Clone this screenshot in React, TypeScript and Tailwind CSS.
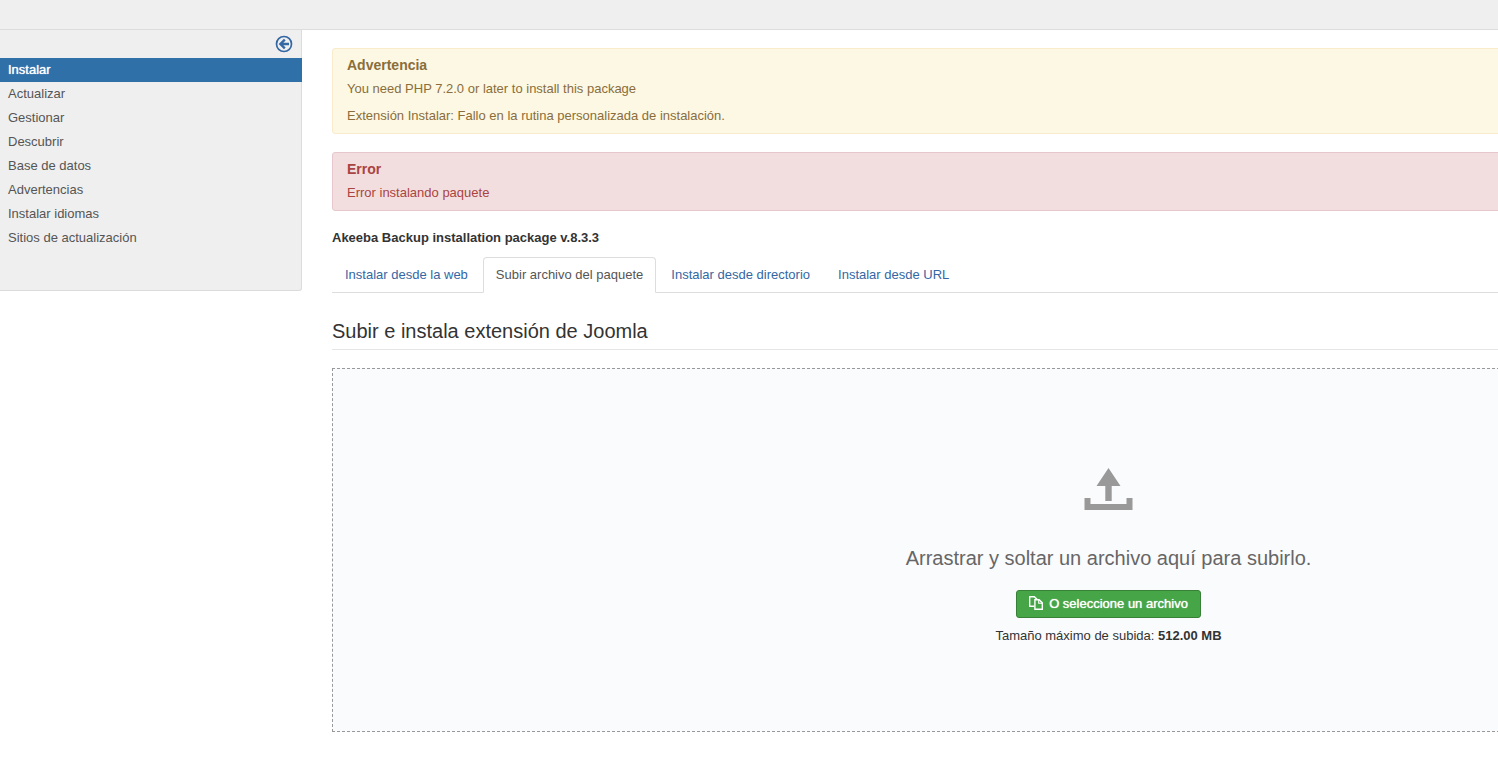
const menu = [
  "Instalar",
  "Actualizar",
  "Gestionar",
  "Descubrir",
  "Base de datos",
  "Advertencias",
  "Instalar idiomas",
  "Sitios de actualización",
];

const tabs = [
  "Instalar desde la web",
  "Subir archivo del paquete",
  "Instalar desde directorio",
  "Instalar desde URL",
];

function ArrowLeftIcon() {
  return (
    <svg width="18" height="18" viewBox="0 0 18 18" fill="none" stroke="currentColor" aria-hidden="true">
      <circle cx="9" cy="9" r="7.5" strokeWidth="1.7" />
      <path d="M14 9H5.4M9.8 4.6L5.4 9l4.4 4.4" strokeWidth="2.4" />
    </svg>
  );
}

function UploadIcon() {
  return (
    <svg width="50" height="42" viewBox="0 0 50 42" fill="currentColor" aria-hidden="true">
      <path d="M24.5 0L36.5 18H27.7v15h-6.4V18h-8.8z" />
      <path d="M.5 30h6v6h36v-6h6v12H.5z" />
    </svg>
  );
}

function CopyIcon() {
  return (
    <svg width="14" height="14" viewBox="0 0 14 14" fill="none" stroke="currentColor" strokeWidth="1.4" className="mb-0.5" aria-hidden="true">
      <path d="M5.2 10.3H.7V.7h4.6l2.9 2.9" />
      <path d="M5.9 3.7h4.2l3.2 3.2v6.4H5.9z" />
      <path d="M9.7 3.9v3.3h3.4" strokeWidth="1.1" />
    </svg>
  );
}

function Alert({ title, messages, className }: { title: string; messages: string[]; className: string }) {
  return (
    <div role="alert" className={`mb-[18px] rounded-[3px] border px-3.5 pt-[7px] pb-2 ${className}`}>
      <h4 className="mb-1.5 text-sm leading-[18px] font-bold">{title}</h4>
      <div className="flex flex-col gap-[9px]">
        {messages.map((message) => (
          <p key={message}>{message}</p>
        ))}
      </div>
    </div>
  );
}

function Sidebar() {
  return (
    <aside className="w-[302px] shrink-0 rounded-br-[3px] border-r border-b border-[#dcdcdc] bg-[#efefef] pb-10">
      <div className="flex h-7 items-center justify-end pr-2">
        <button type="button" aria-label="Ocultar menú" className="text-[#3467a4]">
          <ArrowLeftIcon />
        </button>
      </div>
      <nav className="-mr-px">
        {menu.map((item, i) => (
          <a
            key={item}
            href="#"
            className={
              i === 0
                ? "block bg-[#2f70a9] px-2 py-[3px] text-white [text-shadow:0_0_1px_#fff]"
                : "block px-2 py-[3px] text-[#555]"
            }
          >
            {item}
          </a>
        ))}
      </nav>
    </aside>
  );
}

export default function App() {
  return (
    <div className="min-h-screen overflow-hidden bg-white font-['Liberation_Sans',Arial,sans-serif] text-[13px] leading-[18px] text-[#333]">
      <header className="h-[30px] border-b border-[#dcdcdc] bg-[#efefef]" />
      <div className="flex items-start">
        <Sidebar />
        {/* the work area runs on beyond the right edge of the window */}
        <main className="-mr-[387px] min-w-0 flex-1 pt-[18px] pb-[30px] pl-[30px]">
          <Alert
            title="Advertencia"
            messages={[
              "You need PHP 7.2.0 or later to install this package",
              "Extensión Instalar: Fallo en la rutina personalizada de instalación.",
            ]}
            className="border-[#faebcc] bg-[#fcf8e3] text-[#8a6d3b]"
          />
          <Alert
            title="Error"
            messages={["Error instalando paquete"]}
            className="border-[#e6c7cd] bg-[#f2dede] text-[#a94442]"
          />

          <p className="mb-2.5 font-bold">Akeeba Backup installation package v.8.3.3</p>

          <div role="tablist" className="flex gap-0.5 border-b border-[#ddd]">
            {tabs.map((tab, i) => (
              <button
                key={tab}
                type="button"
                role="tab"
                aria-selected={i === 1}
                className={
                  i === 1
                    ? "-mb-px rounded-t-[4px] border border-[#ddd] border-b-white bg-white px-3 py-2 text-[#555]"
                    : "-mb-px border border-transparent px-3 py-2 text-[#3467a4]"
                }
              >
                {tab}
              </button>
            ))}
          </div>

          <h2 className="mt-5 mb-[18px] border-b border-[#e5e5e5] text-xl leading-9">
            Subir e instala extensión de Joomla
          </h2>

          <section className="flex min-h-[364px] flex-col items-center border border-dashed border-[#999] bg-[#fafbfd] pt-[99px]">
            <span className="text-[#999]">
              <UploadIcon />
            </span>
            <p className="mt-[30px] mb-[14px] text-xl leading-9 text-[#666]">
              Arrastrar y soltar un archivo aquí para subirlo.
            </p>
            <button
              type="button"
              className="flex items-center gap-1.5 rounded-[3px] border border-[#378137] bg-[#46a546] px-3 py-1 text-white [text-shadow:0_0_1px_#fff]"
            >
              <CopyIcon />
              O seleccione un archivo
            </button>
            <p className="mt-[9px]">
              Tamaño máximo de subida: <strong>512.00 MB</strong>
            </p>
          </section>
        </main>
      </div>
    </div>
  );
}
